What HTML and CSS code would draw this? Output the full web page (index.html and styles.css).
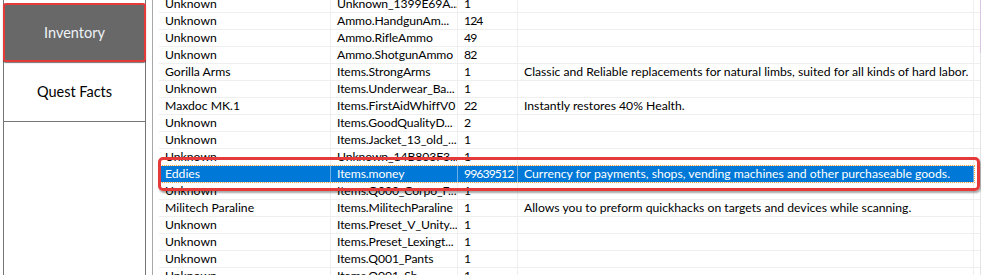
FILE: index.html
```html
<!DOCTYPE html>
<html>
<head>
<meta charset="utf-8">
<link rel="stylesheet" href="styles.css">
</head>
<body>
<div class="app">
  <nav class="nav">
    <div class="tab tab-active">Inventory</div>
    <div class="tab">Quest Facts</div>
  </nav>
  <div class="grid-wrap">
    <div class="rows">
      <div class="row"><span class="c">Unknown</span><span class="c">Unknown_1399E69A...</span><span class="c">1</span><span class="c"></span><span class="t"></span></div>
      <div class="row"><span class="c">Unknown</span><span class="c">Ammo.HandgunAm...</span><span class="c">124</span><span class="c"></span><span class="t"></span></div>
      <div class="row"><span class="c">Unknown</span><span class="c">Ammo.RifleAmmo</span><span class="c">49</span><span class="c"></span><span class="t"></span></div>
      <div class="row"><span class="c">Unknown</span><span class="c">Ammo.ShotgunAmmo</span><span class="c">82</span><span class="c"></span><span class="t"></span></div>
      <div class="row"><span class="c">Gorilla Arms</span><span class="c">Items.StrongArms</span><span class="c">1</span><span class="c">Classic and Reliable replacements for natural limbs, suited for all kinds of hard labor.</span><span class="t"></span></div>
      <div class="row"><span class="c">Unknown</span><span class="c">Items.Underwear_Ba...</span><span class="c">1</span><span class="c"></span><span class="t"></span></div>
      <div class="row"><span class="c">Maxdoc MK.1</span><span class="c">Items.FirstAidWhiffV0</span><span class="c">22</span><span class="c">Instantly restores 40% Health.</span><span class="t"></span></div>
      <div class="row"><span class="c">Unknown</span><span class="c">Items.GoodQualityD...</span><span class="c">2</span><span class="c"></span><span class="t"></span></div>
      <div class="row"><span class="c">Unknown</span><span class="c">Items.Jacket_13_old_...</span><span class="c">1</span><span class="c"></span><span class="t"></span></div>
      <div class="row"><span class="c">Unknown</span><span class="c">Unknown_14B803F3...</span><span class="c">1</span><span class="c"></span><span class="t"></span></div>
      <div class="row sel"><span class="c">Eddies</span><span class="c">Items.money</span><span class="c">99639512</span><span class="c">Currency for payments, shops, vending machines and other purchaseable goods.</span><span class="t"></span><span class="mark"></span></div>
      <div class="row"><span class="c">Unknown</span><span class="c">Items.Q000_Corpo_F...</span><span class="c">1</span><span class="c"></span><span class="t"></span></div>
      <div class="row"><span class="c">Militech Paraline</span><span class="c">Items.MilitechParaline</span><span class="c">1</span><span class="c">Allows you to preform quickhacks on targets and devices while scanning.</span><span class="t"></span></div>
      <div class="row"><span class="c">Unknown</span><span class="c">Items.Preset_V_Unity...</span><span class="c">1</span><span class="c"></span><span class="t"></span></div>
      <div class="row"><span class="c">Unknown</span><span class="c">Items.Preset_Lexingt...</span><span class="c">1</span><span class="c"></span><span class="t"></span></div>
      <div class="row"><span class="c">Unknown</span><span class="c">Items.Q001_Pants</span><span class="c">1</span><span class="c"></span><span class="t"></span></div>
      <div class="row"><span class="c">Unknown</span><span class="c">Items.Q001_Sh...</span><span class="c">1</span><span class="c"></span><span class="t"></span></div>
    </div>
  </div>
  <div class="scroll"></div>
</div>
</body>
</html>
```

FILE: styles.css
```css
html, body {
  margin: 0;
  background: #fff;
}
body {
  font-family: Lato, "Open Sans", sans-serif;
  color: #000;
}
.app {
  display: flex;
  width: 981px;
  height: 275px;
  overflow: hidden;
}
.nav {
  flex: none;
  width: 141px;
  margin-left: 3px;
  padding-top: 3px;
  border-left: 1px solid #767676;
  border-right: 1px solid #767676;
  display: flex;
  flex-direction: column;
}
.tab {
  box-sizing: border-box;
  height: 60px;
  display: flex;
  align-items: center;
  justify-content: center;
  font-size: 14.5px;
  color: #000;
  border-bottom: 1px solid #767676;
}
.tab-active {
  height: 59px;
  margin: 0 -1px;
  background: #686868;
  color: #eef2f6;
  border: 2px solid #e53a3a;
  border-radius: 3px;
  box-shadow: 0 1px 1px rgba(0, 0, 0, 0.55);
  position: relative;
  z-index: 1;
}
.grid-wrap {
  flex: none;
  width: 821px;
  margin-left: 6px;
  padding-left: 6px;
  border-left: 1px solid #a8a8a8;
}
.rows {
  margin-top: -4px;
}
.row {
  position: relative;
  box-sizing: border-box;
  height: 17px;
  display: grid;
  grid-template-columns: 172px 127px 60px 456px 6px;
  border-bottom: 1px solid #efefef;
  font-size: 12.2px;
  line-height: 16px;
}
.c {
  box-sizing: border-box;
  padding-left: 6px;
  border-right: 1px solid #efefef;
  white-space: nowrap;
  overflow: hidden;
}
.c:nth-child(2) {
  letter-spacing: -0.1px;
}
.c:nth-child(3) {
  letter-spacing: -0.9px;
}
.sel .c {
  background: #0078d7;
  color: #fff;
  border-right-color: #6aaee6;
}
.sel::after {
  content: "";
  position: absolute;
  left: 1px;
  top: -1px;
  width: 813px;
  height: 16px;
  border: 1px dotted #f2a73a;
  pointer-events: none;
}
.mark {
  position: absolute;
  left: -1px;
  top: -9px;
  width: 822px;
  height: 34px;
  box-sizing: border-box;
  border: 3px solid #e53a3a;
  border-radius: 5px;
  box-shadow: 1px 2px 2px rgba(0, 0, 0, 0.35);
  z-index: 2;
}
.scroll {
  flex: none;
  width: 1px;
  background: linear-gradient(#dcc6e6 0 53px, #e4e4e4 53px);
}
```
